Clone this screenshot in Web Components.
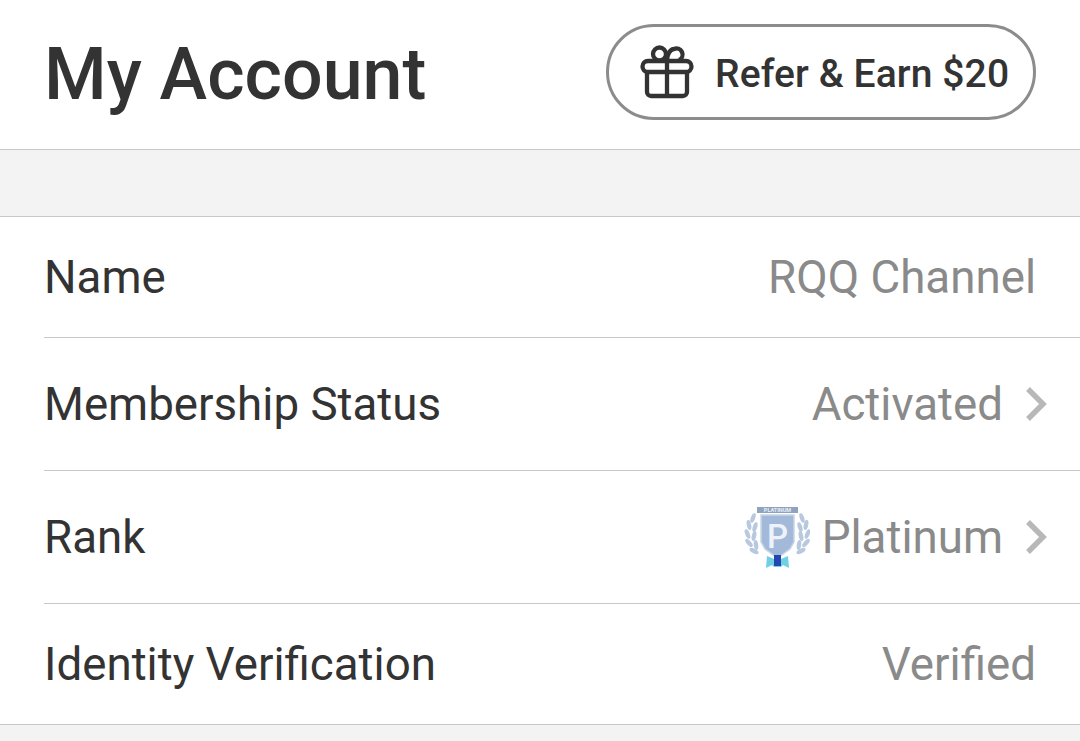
<!DOCTYPE html>
<html>
<head>
<meta charset="utf-8">
<style>
  html, body { margin: 0; padding: 0; background: #f3f3f3; }
  body { font-family: Roboto, "Liberation Sans", sans-serif; color: #333; overflow: hidden; }
</style>
</head>
<body>
<account-header>
  My Account
  <refer-button slot="action">Refer &amp; Earn $20</refer-button>
</account-header>
<account-list>
  <account-row style="--row-h:121px">
    Name
    <span slot="value">RQQ Channel</span>
  </account-row>
  <account-row arrow style="--row-h:133px">
    Membership Status
    <span slot="value">Activated</span>
  </account-row>
  <account-row arrow style="--row-h:133px">
    Rank
    <rank-badge slot="value">Platinum</rank-badge>
  </account-row>
  <account-row last style="--row-h:120px">
    Identity Verification
    <span slot="value">Verified</span>
  </account-row>
</account-list>

<script>
class AccountHeader extends HTMLElement {
    constructor() {
        super();
        this.attachShadow({ mode: 'open' });
    }

    connectedCallback() {
        this.shadowRoot.innerHTML = `
            <style>
                :host {
                    display: flex;
                    align-items: center;
                    justify-content: space-between;
                    box-sizing: border-box;
                    height: 150px;
                    padding: 0 44px 5px 44px;
                    background: #fff;
                    border-bottom: 1px solid #c8c8c8;
                    font-size: 71.7px;
                    font-weight: 500;
                    color: #333;
                }
                .title { padding-top: 4px; }
            </style>
            <div class="title"><slot></slot></div>
            <slot name="action"></slot>
        `;
    }
}

class ReferButton extends HTMLElement {
    constructor() {
        super();
        this.attachShadow({ mode: 'open' });
    }

    connectedCallback() {
        this.shadowRoot.innerHTML = `
            <style>
                :host {
                    display: flex;
                    align-items: center;
                    gap: 19px;
                    box-sizing: border-box;
                    width: 430px;
                    height: 96px;
                    padding: 0 0 0 31px;
                    border: 3px solid #8c8c8c;
                    border-radius: 48px;
                    font-size: 39px;
                    font-weight: 500;
                    letter-spacing: 0.1px;
                    color: #333;
                    white-space: nowrap;
                }
                svg { width: 56px; height: 56px; flex: none; }
                .label { padding-top: 4px; }
            </style>
            <svg viewBox="0 0 56 56" fill="none" stroke="#333" stroke-width="4.3" stroke-linejoin="round">
                <rect x="2.500" y="17" width="49" height="11" rx="5.500"/>
                <path d="M7 28v20a4 4 0 0 0 4 4h32a4 4 0 0 0 4-4V28"/>
                <path d="M27 17v35"/>
                <circle cx="19.500" cy="10" r="6.500"/>
                <path d="M27 17c0-6 3-12 7-12a6 6 0 0 1 5 11"/>
            </svg>
            <div class="label"><slot></slot></div>
        `;
    }
}

class AccountList extends HTMLElement {
    constructor() {
        super();
        this.attachShadow({ mode: 'open' });
    }

    connectedCallback() {
        this.shadowRoot.innerHTML = `
            <style>
                :host {
                    display: block;
                    margin-top: 66px;
                    background: #fff;
                    border-top: 1px solid #c8c8c8;
                    border-bottom: 1px solid #c8c8c8;
                }
            </style>
            <slot></slot>
        `;
    }
}

class AccountRow extends HTMLElement {
    constructor() {
        super();
        this.attachShadow({ mode: 'open' });
    }

    connectedCallback() {
        const arrow = this.hasAttribute('arrow') ? `
            <svg viewBox="0 0 22 36" fill="none" stroke="#b8b8b8" stroke-width="5.5">
                <path d="M2 3l15 15L2 33"/>
            </svg>` : '';
        this.shadowRoot.innerHTML = `
            <style>
                :host {
                    display: block;
                    margin-left: 44px;
                    font-size: 45.7px;
                    color: #333;
                }
                .row {
                    display: flex;
                    align-items: center;
                    justify-content: space-between;
                    box-sizing: border-box;
                    height: var(--row-h);
                    padding: 0 44px 0 0;
                    border-bottom: 1px solid #c8c8c8;
                }
                :host([last]) .row { border-bottom: 0; }
                :host([arrow]) .row { padding-right: 32px; }
                .value {
                    display: flex;
                    align-items: center;
                    gap: 23px;
                    color: #8a8a8a;
                }
                svg { width: 22px; height: 36px; flex: none; }
            </style>
            <div class="row">
                <slot></slot>
                <div class="value"><slot name="value"></slot>${arrow}</div>
            </div>
        `;
    }
}

class RankBadge extends HTMLElement {
    constructor() {
        super();
        this.attachShadow({ mode: 'open' });
    }

    connectedCallback() {
        // laurel leaves: left side only, the right side is the same group mirrored
        const leaves = [
            [9, 13, 20], [5, 20, -12], [3.500, 29, -22], [5, 38, -42], [10, 46, -62],
            [11, 22, 18], [10, 31, 12], [12, 40, -8]
        ].map(([x, y, r]) => `<ellipse cx="${x}" cy="${y}" rx="2.200" ry="5" transform="rotate(${r} ${x} ${y})"/>`).join('');
        this.shadowRoot.innerHTML = `
            <style>
                :host { display: flex; align-items: center; gap: 12px; }
                svg { width: 66px; height: 64px; flex: none; }
                text { font-family: Roboto, sans-serif; text-anchor: middle; fill: #e8eef6; }
            </style>
            <svg viewBox="0 0 66 64">
                <g fill="#b7c8df">${leaves}</g>
                <g fill="#b7c8df" transform="matrix(-1 0 0 1 67 0)">${leaves}</g>
                <rect x="13" y="2" width="41" height="6" fill="#8fa3bf"/>
                <text x="33.500" y="7" font-size="5.500" font-weight="700">PLATINUM</text>
                <path d="M17 10h33v27l-4 7-12.500 9-12.500-9-4-7z" fill="#a3b9da" stroke="#c9d6e8" stroke-width="1.500"/>
                <text x="33.500" y="43" font-size="33" font-weight="500" style="fill:#eef3f9">P</text>
                <path d="M23 51l7 3h7l7-3 1 12-6-3-2 2h-7l-2-2-6 3z" fill="#6fd0e4"/>
                <rect x="30" y="50" width="7" height="11" fill="#2346b0"/>
            </svg>
            <slot></slot>
        `;
    }
}

customElements.define('account-header', AccountHeader);
customElements.define('refer-button', ReferButton);
customElements.define('account-list', AccountList);
customElements.define('account-row', AccountRow);
customElements.define('rank-badge', RankBadge);
</script>
</body>
</html>
